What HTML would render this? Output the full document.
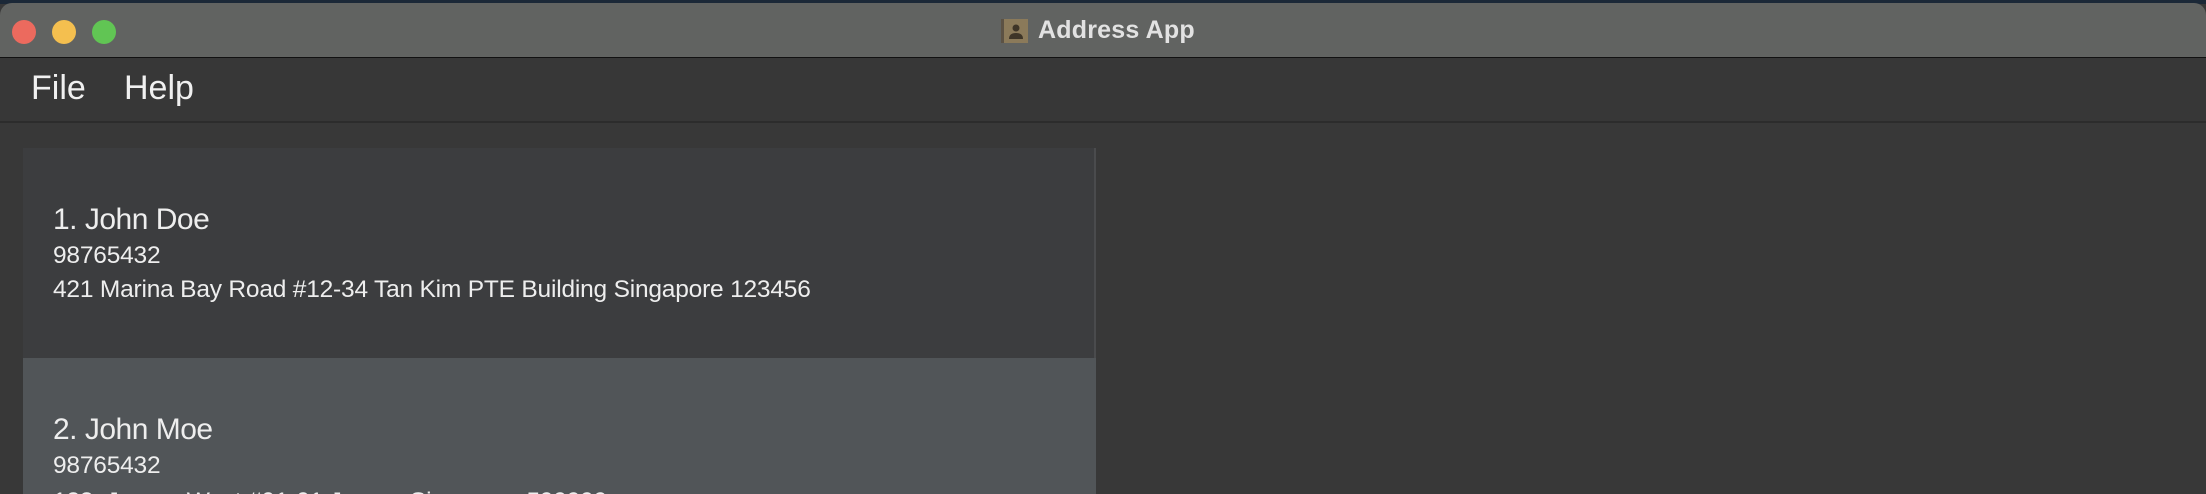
<!DOCTYPE html>
<html style="overflow:hidden;width:2206px;height:494px"><head><style>
*{margin:0;padding:0;box-sizing:border-box}
body{width:2206px;height:494px;overflow:hidden;background:#383838;font-family:"Liberation Sans",sans-serif;position:relative}
.top{position:absolute;left:0;top:0;width:2206px;height:4px;background:#1b2837}
.tb{position:absolute;left:0;top:3px;width:2206px;height:55px;background:#616361;border-radius:12px 12px 0 0;border-bottom:1px solid #111}
.dot{position:absolute;top:17px;width:24px;height:24px;border-radius:50%}
.title{position:absolute;left:1038px;top:13px;font-size:25px;font-weight:bold;color:#e2e2e2;letter-spacing:0.2px}
.icon{position:absolute;left:1001px;top:16px;width:27px;height:24px;background:#8b7a5a;border-left:3px solid #5c5244}
.menu{position:absolute;left:0;top:58px;width:2206px;height:65px;background:#373737;border-bottom:2px solid #2c2c2c}
.menu span{position:absolute;top:11px;font-size:34px;color:#f0f0f0}
.card{position:absolute;left:23px;width:1073px;color:#eee;overflow:hidden}
.n{position:absolute;left:30px;font-size:30px;letter-spacing:-0.5px}
.p{position:absolute;left:30px;font-size:24.5px;letter-spacing:-0.2px}
</style></head><body>
<div class="top"></div>
<div class="tb">
<div class="dot" style="left:12px;background:#ec6a5e"></div>
<div class="dot" style="left:52px;background:#f4bf4f"></div>
<div class="dot" style="left:92px;background:#61c554"></div>
<div class="icon"><svg width="24" height="24" viewBox="0 0 24 24" style="position:absolute;left:0;top:0"><circle cx="12" cy="9" r="3.5" fill="#3e3528"/><path d="M5 20 Q5 14 12 14 Q19 14 19 20Z" fill="#3e3528"/></svg></div>
<div class="title">Address App</div>
</div>
<div class="menu"><span style="left:31px">File</span><span style="left:124px">Help</span></div>
<div class="card" style="top:148px;height:210px;background:#3c3d3f;border-right:2px solid #4a4b4d">
<div class="n" style="top:55px">1. John Doe</div>
<div class="p" style="top:94px">98765432</div>
<div class="p" style="top:128px">421 Marina Bay Road #12-34 Tan Kim PTE Building Singapore 123456</div>
</div>
<div class="card" style="top:358px;height:136px;background:#515558">
<div class="n" style="top:55px">2. John Moe</div>
<div class="p" style="top:94px">98765432</div>
<div class="p" style="top:130px">123, Jurong West #01-01 Jurong Singapore 599999</div>
</div>
</body></html>
